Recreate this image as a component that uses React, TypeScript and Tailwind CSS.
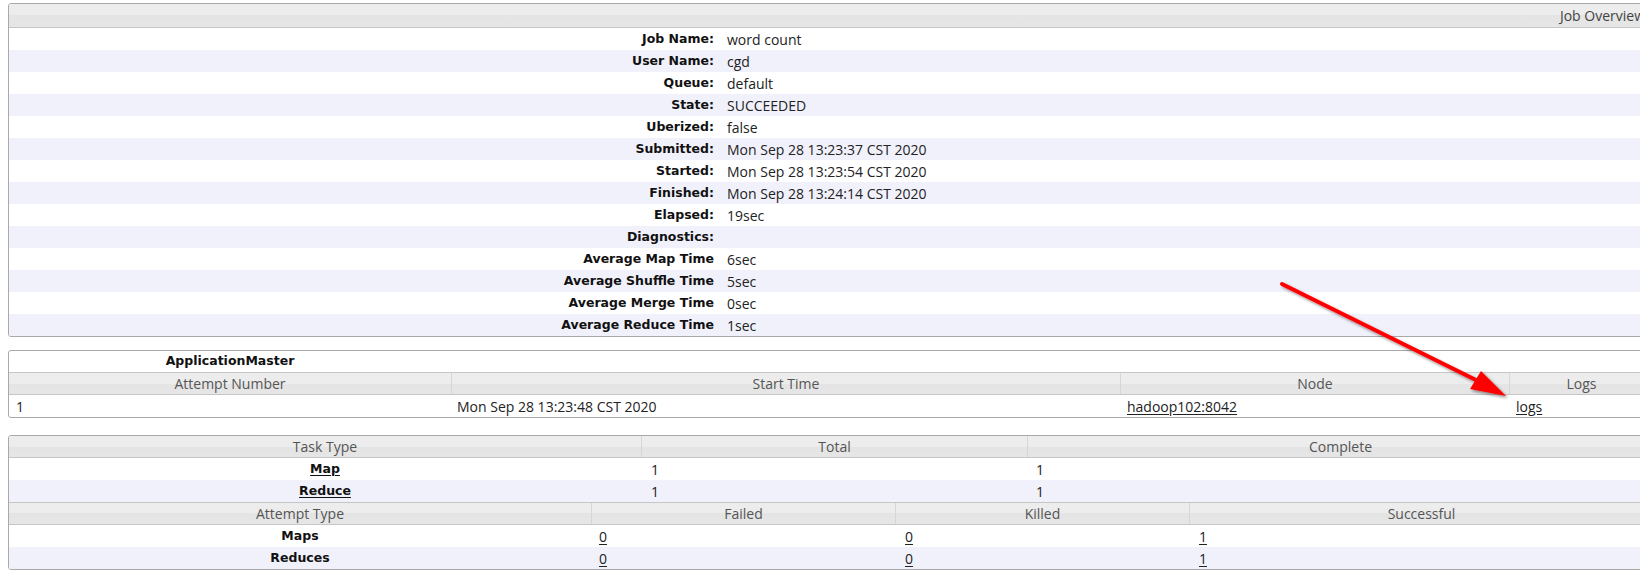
import React from "react";

const LABEL_FONT = { fontFamily: '"DejaVu Sans", Verdana, sans-serif' };
const TEXT_FONT = { fontFamily: '"Open Sans", "Noto Sans", sans-serif' };

const OVERVIEW: [string, string][] = [
  ["Job Name:", "word count"],
  ["User Name:", "cgd"],
  ["Queue:", "default"],
  ["State:", "SUCCEEDED"],
  ["Uberized:", "false"],
  ["Submitted:", "Mon Sep 28 13:23:37 CST 2020"],
  ["Started:", "Mon Sep 28 13:23:54 CST 2020"],
  ["Finished:", "Mon Sep 28 13:24:14 CST 2020"],
  ["Elapsed:", "19sec"],
  ["Diagnostics:", ""],
  ["Average Map Time", "6sec"],
  ["Average Shuffle Time", "5sec"],
  ["Average Merge Time", "0sec"],
  ["Average Reduce Time", "1sec"],
];

const headBg = "bg-[linear-gradient(#ededed_0%,#ececec_50%,#e4e4e4_50%,#e6e6e6_100%)]";

function HeadCell({ children, first }: { children?: React.ReactNode; first?: boolean }) {
  return (
    <div
      className={`h-[21px] flex items-center justify-center text-[14px] text-[#555] ${first ? "" : "border-l border-[#d6d6d6]"}`}
      style={TEXT_FONT}
    >
      {children}
    </div>
  );
}

function HeadRow({ cols, labels, topBorder }: { cols: string; labels: string[]; topBorder?: boolean }) {
  return (
    <div className={`grid ${cols} ${headBg} border-b border-[#c6c6c6] ${topBorder ? "border-t border-t-[#c6c6c6]" : ""}`}>
      {labels.map((l, i) => (
        <HeadCell key={l} first={i === 0}>
          {l}
        </HeadCell>
      ))}
    </div>
  );
}

function Val({ children, link, className = "" }: { children?: React.ReactNode; link?: boolean; className?: string }) {
  return (
    <div
      className={`flex items-center pl-2 text-[14px] text-[#222] ${link ? "underline underline-offset-2" : ""} ${className}`}
      style={TEXT_FONT}
    >
      {children}
    </div>
  );
}

function Arrow() {
  return (
    <svg className="absolute left-0 top-0 pointer-events-none" width="1640" height="576" viewBox="0 0 1640 576">
      <defs>
        <filter id="sh" x="-20%" y="-20%" width="140%" height="140%">
          <feDropShadow dx="2" dy="2" stdDeviation="1.6" floodColor="#000" floodOpacity="0.45" />
        </filter>
      </defs>
      <g filter="url(#sh)">
        <line x1="1282" y1="284" x2="1482" y2="383" stroke="#ff0000" strokeWidth="4" strokeLinecap="round" />
        <polygon points="1506,396 1481,371 1470,389" fill="#ff0000" />
      </g>
    </svg>
  );
}

export default function App() {
  return (
    <div className="relative w-[1640px] h-[576px] overflow-hidden bg-white">
      <div className="pl-2 pt-[3px] flex flex-col w-[1654px]">
        {/* Job Overview */}
        <div className="border border-[#a9a9a9] rounded-[3px] overflow-hidden">
          <div className={`h-[24px] ${headBg} border-b border-[#c6c6c6] flex items-center justify-end pr-2 text-[14px] text-[#444]`} style={TEXT_FONT}>
            Job Overview
          </div>
          {OVERVIEW.map(([k, v], i) => (
            <div key={k} className={`grid grid-cols-[712px_1fr] h-[22px] ${i % 2 ? "bg-[#f1f1fc]" : "bg-white"}`}>
              <div className="flex items-center justify-end pr-[7px] text-[12.5px] font-bold text-[#111]" style={LABEL_FONT}>
                {k}
              </div>
              <div className="flex items-center pl-[6px] text-[14px] text-[#222]" style={TEXT_FONT}>
                {v}
              </div>
            </div>
          ))}
        </div>

        {/* ApplicationMaster */}
        <div className="mt-[13px] border border-[#a9a9a9] rounded-[3px] overflow-hidden">
          <div className="grid grid-cols-[442px_1fr] h-[21px]">
            <div className="flex items-center justify-center text-[12.5px] font-bold text-[#111]" style={LABEL_FONT}>
              ApplicationMaster
            </div>
            <div />
          </div>
          <HeadRow
            cols="grid-cols-[442px_669px_389px_1fr]"
            labels={["Attempt Number", "Start Time", "Node", "Logs"]}
            topBorder
          />
          <div className="grid grid-cols-[442px_669px_389px_1fr] h-[22px]">
            <Val className="pl-[7px]">1</Val>
            <Val className="pl-[6px]">Mon Sep 28 13:23:48 CST 2020</Val>
            <Val link className="pl-[7px]">hadoop102:8042</Val>
            <Val link className="pl-[7px]">logs</Val>
          </div>
        </div>

        {/* Tasks */}
        <div className="mt-[17px] border border-[#a9a9a9] rounded-[3px] overflow-hidden">
          <HeadRow cols="grid-cols-[632px_386px_1fr]" labels={["Task Type", "Total", "Complete"]} />
          {["Map", "Reduce"].map((t, i) => (
            <div key={t} className={`grid grid-cols-[632px_386px_1fr] h-[22px] ${i % 2 ? "bg-[#f1f1fc]" : "bg-white"}`}>
              <div className="flex items-center justify-center text-[12.5px] font-bold text-[#111] underline underline-offset-2" style={LABEL_FONT}>
                {t}
              </div>
              <Val className="pl-[10px]">1</Val>
              <Val className="pl-[9px]">1</Val>
            </div>
          ))}
          <HeadRow
            cols="grid-cols-[582px_304px_294px_1fr]"
            labels={["Attempt Type", "Failed", "Killed", "Successful"]}
            topBorder
          />
          {["Maps", "Reduces"].map((t, i) => (
            <div key={t} className={`grid grid-cols-[582px_304px_294px_1fr] h-[22px] ${i % 2 ? "bg-[#f1f1fc]" : "bg-white"}`}>
              <div className="flex items-center justify-center text-[12.5px] font-bold text-[#111]" style={LABEL_FONT}>
                {t}
              </div>
              <Val link className="pl-2">0</Val>
              <Val link className="pl-[10px]">0</Val>
              <Val link className="pl-[10px]">1</Val>
            </div>
          ))}
        </div>
      </div>
      <Arrow />
    </div>
  );
}
